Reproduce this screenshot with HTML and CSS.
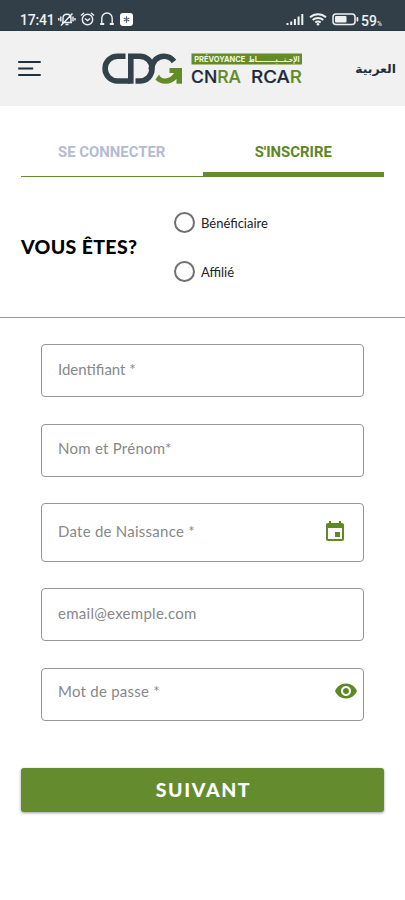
FILE: index.html
```html
<!DOCTYPE html>
<html lang="fr">
<head>
<meta charset="utf-8">
<title>S'inscrire</title>
<link rel="stylesheet" href="styles.css">
</head>
<body>
<div class="status">
  <span class="clock">17:41</span>
  <svg class="status-left" width="76" height="18" viewBox="0 0 76 18" fill="none" stroke="#eef1f2" stroke-width="1.4">
    <path d="M4 12.500h10M5 12V8c0-2 1.500-3.800 4-3.800S13 6 13 8v4M7.500 14.500h3M3 15.500L14.500 3.500"/>
    <path d="M2.800 6.500v5M.800 8v2.500M15 6.500v5M17 8v2.500"/>
    <circle cx="29.500" cy="9.500" r="5.200"/><path d="M27 8.500L29.500 10.500l2.700-2M23 5.500l3-2.500M36 5.500l-3-2.500"/>
    <path d="M43.800 14V8.200a5.200 5.200 0 0 1 10.400 0V14"/><path stroke-width="2" d="M42.200 14h4M51.800 14h4"/>
    <rect x="62" y="3" width="13" height="13" rx="3" fill="#fff" stroke="none"/>
    <path stroke="#4c6478" stroke-width="1.200" d="M68.500 6.300v6.400M65.700 7.900l5.600 3.200M71.300 7.900l-5.600 3.200"/>
  </svg>
  <svg class="status-right" width="74" height="16" viewBox="0 0 74 16" fill="#eef1f2">
    <path d="M.500 12h2v2h-2zM4.200 10.500h2V14h-2zM7.900 8h2v6h-2zM11.600 5.500h2V14h-2zM15.300 3h2v11h-2z"/>
    <g fill="none" stroke="#eef1f2" stroke-width="2"><path d="M24 6.300c4.700-4.200 11.300-4.200 16 0M26.700 9c3-2.700 7.600-2.700 10.600 0M29.300 11.500c1.700-1.300 3.700-1.300 5.400 0"/></g>
    <circle cx="32" cy="13.200" r="1.300"/>
    <rect x="47" y="3" width="22" height="10.500" rx="3" fill="none" stroke="#eef1f2" stroke-width="1.500"/>
    <rect x="49" y="5" width="11.500" height="6.500" rx="1"/><rect x="70.500" y="6" width="1.800" height="4.500" rx=".8"/>
  </svg>
  <span class="battery">59<small>%</small></span>
</div>
<header class="header">
  <svg class="menu" width="24" height="18" viewBox="0 0 24 18" stroke="#20313d" stroke-width="2"><path d="M.200 2H22.700M.200 8.500H15.200M.200 15H22.700"/></svg>
  <svg class="logo" width="202" height="36" viewBox="0 0 202 36">
    <g fill="none" stroke="#33414b" stroke-width="5.600">
      <path d="M24.500 5.200H16.500A12.400 12.400 0 0 0 16.500 30H28.700"/>
      <path d="M29.800 32.800V5.200H38.500C46 5.200 51 10.500 51 17.600S46 30 38.500 30H34.500"/>
      <path d="M50 18.500C52 9.500 56 5.200 63 5.200C67.500 5.200 70.500 7 73 10.500"/>
    </g>
    <path fill="#648c26" d="M68.500 17H81V32.700H75.500V28C72.500 31.200 69 32.700 64.500 32.700C60 32.700 56.500 31 54.500 28.500L58 23.500C59 26.300 61 27.400 64 27.400C68 27.400 71 25.500 73 22H68.500Z"/>
    <rect x="90.500" y="2.500" width="110.500" height="11" fill="#648c26"/>
    <text class="tag" x="93.300" y="11" textLength="51" lengthAdjust="spacingAndGlyphs">PRÉVOYANCE</text>
    <text class="tag tag-ar" x="198.500" y="10.600" direction="rtl" textLength="51" lengthAdjust="spacingAndGlyphs">الإحـتـــيـــــــــاط</text>
    <text class="brand" x="90" y="32.400" textLength="50" lengthAdjust="spacingAndGlyphs">CN<tspan class="green">RA</tspan></text>
    <text class="brand" x="150" y="32.400" textLength="51" lengthAdjust="spacingAndGlyphs">RCA<tspan class="green">R</tspan></text>
  </svg>
  <span class="lang" dir="rtl" lang="ar">العربية</span>
</header>
<nav class="tabs">
  <div class="tab">SE CONNECTER</div>
  <div class="tab active">S'INSCRIRE</div>
</nav>
<section class="role">
  <h1>VOUS ÊTES?</h1>
  <div class="options">
    <label class="option"><span class="radio"></span><span>Bénéficiaire</span></label>
    <label class="option"><span class="radio"></span><span>Affilié</span></label>
  </div>
</section>
<main class="form">
  <div class="field plain"><span>Identifiant *</span></div>
  <div class="field name"><span>Nom et Prénom*</span></div>
  <div class="field date"><span>Date de Naissance *</span>
    <svg class="calendar" width="24" height="24" viewBox="0 0 24 24" fill="#5c8a24"><path d="M17 12h-5v5h5v-5zM16 1v2H8V1H6v2H5c-1.110 0-1.990.9-1.990 2L3 19c0 1.100.89 2 2 2h14c1.100 0 2-.9 2-2V5c0-1.100-.9-2-2-2h-1V1h-2zm3 18H5V8h14v11z"/></svg>
  </div>
  <div class="field email"><span>email@exemple.com</span></div>
  <div class="field password"><span>Mot de passe *</span>
    <svg class="eye" width="24" height="24" viewBox="0 0 24 24" fill="#5c8a24"><path d="M12 4.500C7 4.500 2.730 7.610 1 12c1.730 4.390 6 7.500 11 7.500s9.270-3.110 11-7.500c-1.730-4.390-6-7.500-11-7.500zM12 17c-2.760 0-5-2.240-5-5s2.240-5 5-5 5 2.240 5 5-2.240 5-5 5zm0-8c-1.660 0-3 1.340-3 3s1.340 3 3 3 3-1.340 3-3-1.340-3-3-3z"/></svg>
  </div>
</main>
<div class="actions"><button class="next">SUIVANT</button></div>
</body>
</html>
```
FILE: styles.css
```css
* { box-sizing: border-box; }
body { margin: 0; height: 900px; overflow: hidden; background: #fff; font-family: Lato, sans-serif; color: #222; }
svg { display: block; flex: none; overflow: visible; }

.status { height: 31px; display: flex; align-items: center; padding: 9px 21px 0 20px; background: #333f48; border-bottom: 1px solid #253943; color: #eef1f2; font: 500 14px/18px Roboto, sans-serif; }
.clock { width: 38px; letter-spacing: -0.2px; }
.status-left { margin-bottom: 2px; }
.status-right { margin-left: auto; margin-right: 1px; margin-bottom: 1px; }
.battery { width: 23px; white-space: nowrap; line-height: 16px; padding-top: 2px; }
.battery small { font-size: 6.500px; line-height: 1; }

.header { height: 75px; display: flex; align-items: center; padding: 0 9px 0 18px; background: #f1f1f1; }
.logo { margin-left: 59px; }
.lang { margin-left: auto; color: #222e36; font: 700 12.400px/22px "DejaVu Sans", sans-serif; white-space: nowrap; }
.tag { fill: #f4f8ea; font: 700 8px Inter, sans-serif; }
.tag-ar { font-family: "DejaVu Sans", sans-serif; }
.brand { fill: #1c2b3a; font: 500 17.500px Inter, sans-serif; stroke: #1c2b3a; stroke-width: 0.200px; }
.green { fill: #648c26; stroke: #648c26; }

.tabs { display: grid; grid-template-columns: 1fr 1fr; height: 71px; padding: 0 21px; font: 700 14.900px/20px Roboto, sans-serif; text-align: center; }
.tab { padding-top: 36px; color: #b6bbd2; border-bottom: 1px solid #648c2f; }
.tab.active { color: #5b8725; border-bottom-width: 5px; }

.role { height: 141px; display: grid; grid-template-columns: 153px 1fr; align-items: center; padding-left: 21px; border-bottom: 1px solid #999; }
h1 { margin: 0; font-size: 19.500px; line-height: 24px; font-weight: 900; color: #000; letter-spacing: 0.350px; white-space: nowrap; }
.options { display: grid; gap: 28px; }
.option { display: flex; align-items: center; gap: 6px; font-size: 13px; line-height: 18px; }
.radio { width: 21px; height: 21px; border: 2px solid #707070; border-radius: 50%; }

.form { display: grid; gap: 26.200px; padding: 26.400px 41px 0; }
.field { height: 53px; display: flex; align-items: center; justify-content: space-between; padding: 0 16px 3px; border: 1px solid #979797; border-radius: 4px; color: #888; font-size: 15px; line-height: 20px; letter-spacing: 0.250px; }
.field.plain { letter-spacing: 0; }
.field.name { padding-bottom: 4px; }
.field.email { letter-spacing: 0.280px; }
.field.date { height: 59.400px; }
.calendar { margin-top: 3px; }
.field.password { padding-right: 5px; padding-bottom: 6px; }

.actions { padding: 47.400px 21px 0; }
.next { display: block; width: 100%; height: 44px; padding: 0 0 0 2px; border: 0; border-radius: 3px; background: #648c2f; box-shadow: 0 1px 3px rgba(0,0,0,.4); color: #fff; font: 900 19.500px/44px Lato, sans-serif; letter-spacing: 1.600px; }
```
